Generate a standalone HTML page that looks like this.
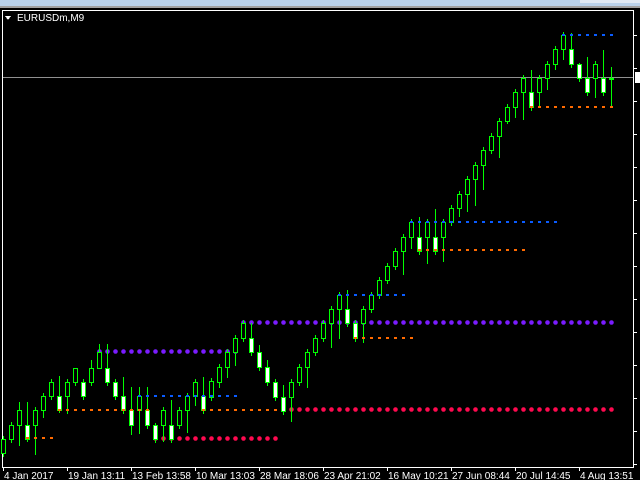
<!DOCTYPE html>
<html><head><meta charset="utf-8"><style>
html,body{margin:0;padding:0;background:#000;width:640px;height:480px;overflow:hidden}
.t{font-family:"Liberation Sans",sans-serif;font-size:11px;fill:#fff}
</style></head><body>
<svg id="s" width="640" height="480" xmlns="http://www.w3.org/2000/svg" shape-rendering="crispEdges">
<rect x="0" y="0" width="640" height="480" fill="#000"/>
<rect x="0" y="0" width="640" height="6" fill="#b9d1ea"/>
<rect x="0" y="6" width="640" height="2" fill="#a0a0a0"/>
<rect x="580" y="0" width="60" height="3" fill="#dfe8f2"/>
<rect x="2" y="10" width="632" height="1" fill="#fff"/>
<rect x="2" y="10" width="1" height="458" fill="#fff"/>
<rect x="633" y="10" width="1" height="458" fill="#fff"/>
<rect x="2" y="467" width="632" height="1" fill="#fff"/>
<rect x="3" y="77" width="630" height="1" fill="#909090"/>
<rect x="635" y="72" width="5" height="11" fill="#fff"/>
<polygon points="5,16 11,16 8,20" fill="#fff"/>
<text x="17" y="21" class="t" style="font-size:10px">EURUSDm,M9</text>
<g id="g"></g>
<text x="4" y="479" class="t" style="font-size:10px">4 Jan 2017</text>
<text x="68" y="479" class="t" style="font-size:10px">19 Jan 13:11</text>
<text x="132" y="479" class="t" style="font-size:10px">13 Feb 13:58</text>
<text x="196" y="479" class="t" style="font-size:10px">10 Mar 13:03</text>
<text x="260" y="479" class="t" style="font-size:10px">28 Mar 18:06</text>
<text x="324" y="479" class="t" style="font-size:10px">23 Apr 21:02</text>
<text x="388" y="479" class="t" style="font-size:10px">16 May 10:21</text>
<text x="452" y="479" class="t" style="font-size:10px">27 Jun 08:44</text>
<text x="516" y="479" class="t" style="font-size:10px">20 Jul 14:45</text>
<text x="580" y="479" class="t" style="font-size:10px">4 Aug 13:51</text>
</svg>
<script>
var g=document.getElementById('g'),h='';
function R(x,y,w,hh,c){h+='<rect x="'+x+'" y="'+y+'" width="'+w+'" height="'+hh+'" fill="'+c+'"/>';}
// axis ticks
for(var y=35;y<=464;y+=33)R(634,y,3,1,'#fff');
for(var x=3;x<=580;x+=64)R(x,467,1,4,'#fff');
// dot rows
function row(y,x1,x2,c,big){for(var x=x1;x<=x2;x+=8){if(big)h+='<circle cx="'+(x+0.5)+'" cy="'+(y+0.5)+'" r="2.3" fill="'+c+'" shape-rendering="auto"/>';else R(x-1,y-1,3,2,c);}}
var O='#ff6a00',B='#0a5cff',P='#7a1cff',Rd='#ff0a50';
row(351,99,235,P,1);row(322,243,611,P,1);
row(438,155,275,Rd,1);row(409,283,611,Rd,1);
var D=[[1,439,453,436,456],[1,425,439,422,442],[1,410,425,402,445],[0,425,439,402,441],[1,410,425,407,454],[1,396,410,393,417],[1,382,396,379,399],[0,396,410,376,412],[1,382,396,379,413],[1,368,382,368,385],[0,382,396,379,399],[1,368,382,360,385],[1,352,368,344,365],[0,368,382,344,385],[0,382,396,379,399],[0,396,410,377,413],[0,410,425,387,434],[1,396,410,387,433],[0,410,425,387,428],[0,425,439,423,442],[1,410,425,407,441],[0,425,439,400,442],[1,410,425,407,428],[1,396,410,393,432],[1,382,396,379,405],[0,396,410,377,413],[1,381,397,378,400],[1,367,382,364,387],[1,352,367,349,377],[1,338,352,335,365],[1,323,338,320,341],[0,338,352,323,355],[0,352,367,345,370],[0,367,382,360,385],[0,382,397,379,400],[0,397,411,385,414],[1,382,397,379,421],[1,367,382,364,385],[1,352,367,349,387],[1,338,352,335,355],[1,323,338,320,341],[1,309,323,306,347],[1,295,309,292,338],[0,309,323,290,326],[0,323,338,320,341],[1,309,323,306,342],[1,295,309,292,312],[1,280,295,277,298],[1,266,280,263,283],[1,251,266,248,269],[1,237,251,234,274],[1,222,237,219,248],[0,237,251,217,254],[1,222,237,219,263],[0,237,251,209,254],[1,222,237,219,261],[1,208,222,205,225],[1,194,208,191,216],[1,179,194,176,211],[1,165,179,162,205],[1,150,165,147,189],[1,136,150,133,153],[1,121,136,118,157],[1,107,121,104,123],[1,92,107,89,117],[1,78,92,75,119],[0,92,107,70,110],[1,78,92,75,107],[1,64,78,61,89],[1,49,64,46,69],[1,35,49,32,59],[0,49,64,33,67],[0,64,78,63,81],[0,78,92,57,95],[1,64,78,61,97],[0,78,92,50,95],[2,78,78,67,105]];
for(var i=0;i<D.length;i++){var d=D[i],L=1+8*i;
 R(L+2,d[3],1,d[4]-d[3]+1,'#00ff00');
 if(d[0]==2){R(L,d[1],5,2,'#00ff00');continue;}
 R(L,d[1],5,d[2]-d[1]+1,'#00ff00');
 R(L+1,d[1]+1,3,d[2]-d[1]-1,d[0]?'#000':'#fff');}
row(438,27,51,O);row(410,59,147,O);row(410,203,275,O);row(338,355,411,O);row(250,419,523,O);row(107,531,611,O);
row(396,139,235,B);row(295,339,403,B);row(222,411,555,B);row(35,563,611,B);
g.innerHTML=h;
</script>
</body></html>
